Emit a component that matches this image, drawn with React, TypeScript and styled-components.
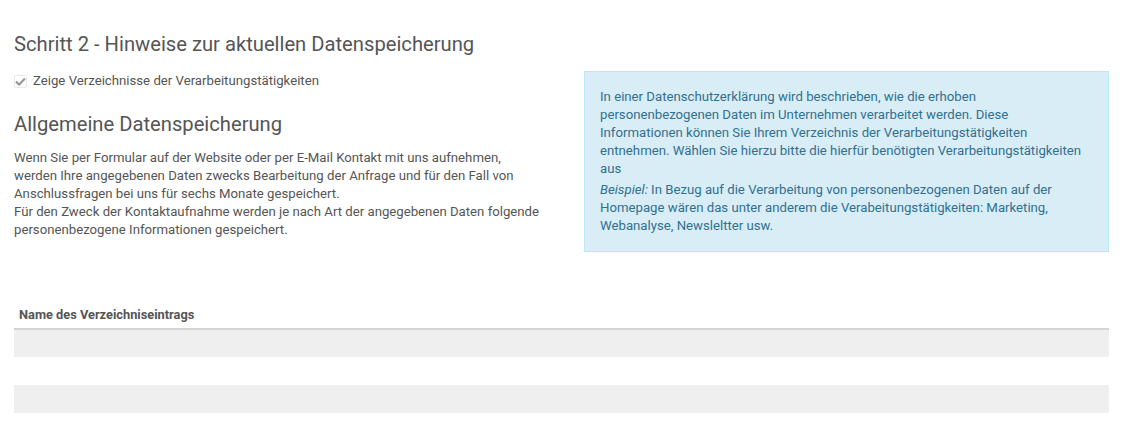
import styled, { createGlobalStyle } from 'styled-components';

const GlobalStyle = createGlobalStyle`
  body {
    margin: 0;
    background: #fff;
    font-family: Roboto, "Liberation Sans", Arial, sans-serif;
    color: #555;
  }
`;

const Page = styled.div`
  width: 1095px;
  padding: 32px 14px 0;
`;

const Title = styled.h2`
  margin: 0 0 15px;
  font-size: 20.2px;
  line-height: 24px;
  font-weight: 400;
  color: #555;
`;

const Columns = styled.div`
  display: grid;
  grid-template-columns: 527px 525px;
  justify-content: space-between;
  align-items: start;
`;

const CheckRow = styled.label`
  display: flex;
  align-items: center;
  gap: 6px;
  margin-top: 1px;
  font-size: 13.2px;
  line-height: 18px;
  color: #555;
`;

const CheckBox = styled.span`
  flex: none;
  width: 13px;
  height: 13px;
  border: 1px solid #e8e8e8;
  border-radius: 2px;
  box-sizing: border-box;
  display: flex;
  align-items: center;
  justify-content: center;
`;

const SubTitle = styled.h3`
  margin: 22px 0 13px;
  font-size: 20.2px;
  line-height: 24px;
  font-weight: 400;
  color: #555;
`;

const Text = styled.p`
  margin: 0;
  font-size: 13.2px;
  line-height: 18px;
  color: #555;
`;

const InfoBox = styled.div`
  background: #d9edf7;
  border: 1px solid #bce8f1;
  color: #31708f;
  padding: 16px 22px 16px 15px;
`;

const InfoText = styled.p`
  margin: 0 0 3px;
  font-size: 13.2px;
  line-height: 18px;

  &:last-child {
    margin-bottom: 0;
  }
`;

const Table = styled.table`
  width: 100%;
  margin-top: 49px;
  border-collapse: collapse;
`;

const HeadCell = styled.th`
  text-align: left;
  font-size: 12.8px;
  font-weight: 700;
  color: #555;
  padding: 6px 5px 6px;
  border-bottom: 2px solid #d4d4d4;
`;

const Row = styled.tr<{ striped: boolean }>`
  height: 28px;
  background: ${({ striped }) => (striped ? '#eeefee' : '#fff')};
`;

const App = () => {
  return (
    <>
      <GlobalStyle />
      <Page>
        <Title>Schritt 2 - Hinweise zur aktuellen Datenspeicherung</Title>
        <Columns>
          <div>
            <CheckRow>
              <CheckBox>
                <svg width="11" height="9" viewBox="0 0 11 9">
                  <path d="M1 4.6 L4.1 7.5 L10 1.4" fill="none" stroke="#999" strokeWidth="2.2" />
                </svg>
              </CheckBox>
              Zeige Verzeichnisse der Verarbeitungstätigkeiten
            </CheckRow>
            <SubTitle>Allgemeine Datenspeicherung</SubTitle>
            <Text>
              Wenn Sie per Formular auf der Website oder per E-Mail Kontakt mit uns aufnehmen,
              werden Ihre angegebenen Daten zwecks Bearbeitung der Anfrage und für den Fall von
              Anschlussfragen bei uns für sechs Monate gespeichert.
              <br />
              Für den Zweck der Kontaktaufnahme werden je nach Art der angegebenen Daten folgende
              personenbezogene Informationen gespeichert.
            </Text>
          </div>
          <InfoBox>
            <InfoText>
              In einer Datenschutzerklärung wird beschrieben, wie die erhoben personenbezogenen
              Daten im Unternehmen verarbeitet werden. Diese Informationen können Sie Ihrem
              Verzeichnis der Verarbeitungstätigkeiten entnehmen. Wählen Sie hierzu bitte die
              hierfür benötigten Verarbeitungstätigkeiten aus
            </InfoText>
            <InfoText>
              <em>Beispiel:</em> In Bezug auf die Verarbeitung von personenbezogenen Daten auf der
              Homepage wären das unter anderem die Verabeitungstätigkeiten: Marketing,
              Webanalyse, Newsleltter usw.
            </InfoText>
          </InfoBox>
        </Columns>
        <Table>
          <thead>
            <tr>
              <HeadCell>Name des Verzeichniseintrags</HeadCell>
            </tr>
          </thead>
          <tbody>
            <Row striped>
              <td />
            </Row>
            <Row striped={false}>
              <td />
            </Row>
            <Row striped>
              <td />
            </Row>
          </tbody>
        </Table>
      </Page>
    </>
  );
};

export default App;
